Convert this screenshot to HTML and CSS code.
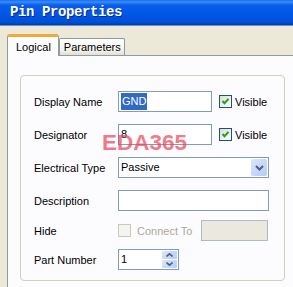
FILE: index.html
```html
<!DOCTYPE html>
<html>
  <head>
    <title>Pin Properties</title>
    <link rel="stylesheet" href="styles.css">
  </head>

  <body>
    <div class="window">
      <div class="titlebar">Pin Properties</div>

      <div class="tabstrip">
        <div class="tab tab-active">Logical</div>
        <div class="tab">Parameters</div>
      </div>

      <div class="panel">
        <div class="group">
          <div class="row">
            <label class="label">Display Name</label>
            <div class="field field-short"><span class="selected">GND</span></div>
            <span class="check checked"></span>
            <span class="check-text">Visible</span>
          </div>
          <div class="row">
            <label class="label">Designator</label>
            <div class="field field-short">8</div>
            <span class="check checked"></span>
            <span class="check-text">Visible</span>
          </div>
          <div class="row">
            <label class="label">Electrical Type</label>
            <div class="field field-long select">
              <span class="select-value">Passive</span>
              <span class="drop-button">
                <svg width="9" height="6" viewBox="0 0 9 6">
                  <path d="M1 1 L4.5 4.5 L8 1" fill="none" stroke="#4d6185" stroke-width="2"/>
                </svg>
              </span>
            </div>
          </div>
          <div class="row row-tight">
            <label class="label">Description</label>
            <div class="field field-long"></div>
          </div>
          <div class="row row-tighter">
            <label class="label">Hide</label>
            <span class="check disabled"></span>
            <span class="check-text muted">Connect To</span>
            <div class="field field-disabled"></div>
          </div>
          <div class="row">
            <label class="label">Part Number</label>
            <div class="field spinner">
              <span class="spin-value">1</span>
              <span class="spin-buttons">
                <span class="spin-button">
                  <svg width="7" height="4" viewBox="0 0 7 4">
                    <path d="M0.5 3.5 L3.5 0.8 L6.5 3.5" fill="none" stroke="#4d6185" stroke-width="1.6"/>
                  </svg>
                </span>
                <span class="spin-button">
                  <svg width="7" height="4" viewBox="0 0 7 4">
                    <path d="M0.5 0.5 L3.5 3.2 L6.5 0.5" fill="none" stroke="#4d6185" stroke-width="1.6"/>
                  </svg>
                </span>
              </span>
            </div>
          </div>
        </div>
      </div>

      <div class="watermark">EDA365</div>
    </div>
  </body>
</html>
```

FILE: styles.css
```css
body {
  margin: 0;
  font-family: "Liberation Sans", Arial, sans-serif;
  font-size: 11px;
  color: #000;
}

.window {
  position: relative;
  width: 293px;
  height: 287px;
  overflow: hidden;
  background-color: #ece9d8;
}

.titlebar {
  height: 26px;
  box-sizing: border-box;
  padding: 5px 0 0 10px;
  background: linear-gradient(#1a6ef0 0, #3a8cf8 2px, #0a5eec 5px, #0056e6 14px, #0050d8 22px, #003ea8 25px, #dcdcdc 26px);
  color: white;
  font-family: "Liberation Mono", "Courier New", monospace;
  font-weight: bold;
  font-size: 14px;
  line-height: 15px;
  letter-spacing: -0.4px;
  text-shadow: 1px 1px #0a2a8c;
}

.tabstrip {
  display: flex;
  align-items: flex-end;
  height: 29px;
  padding-left: 7px;
}

.tab {
  box-sizing: border-box;
  height: 17px;
  padding: 2px 3px 0 4px;
  border: 1px solid #919b9c;
  border-bottom: none;
  border-radius: 2px 2px 0 0;
  background: linear-gradient(#ffffff, #f3f2ec 70%, #e2ded2);
}

.tab-active {
  position: relative;
  z-index: 1;
  height: 22px;
  margin-bottom: -1px;
  padding: 4px 7px 0 8px;
  border-top: 3px solid #f2a93a;
  border-radius: 3px 3px 0 0;
  background: #fcfcfe;
}

.panel {
  box-sizing: border-box;
  height: 240px;
  margin-left: 7px;
  padding: 19px 0 0 12px;
  border: 1px solid #919b9c;
  border-right: none;
  background-color: #fcfcfe;
}

.group {
  box-sizing: border-box;
  width: 265px;
  height: 206px;
  padding: 15px 0 0 13px;
  border: 1px solid #d0d0bf;
  border-radius: 4px;
}

.row {
  display: flex;
  align-items: center;
  height: 21px;
  margin-bottom: 12px;
}

.row-tight {
  margin-bottom: 9px;
}

.row-tighter {
  margin-bottom: 8px;
}

.label {
  width: 84px;
  flex-shrink: 0;
}

.field {
  box-sizing: border-box;
  height: 21px;
  padding: 1px 2px;
  border: 1px solid #7f9db9;
  background-color: #fff;
  line-height: 17px;
}

.field-short {
  width: 94px;
}

.field-long {
  width: 151px;
}

.selected {
  display: inline-block;
  padding: 0 1px;
  background-color: #316ac5;
  color: white;
}

.check {
  box-sizing: border-box;
  width: 13px;
  height: 13px;
  margin-left: 7px;
  border: 1px solid #1c5180;
  background: linear-gradient(135deg, #dcdcd6, #fff);
}

.checked {
  background:
    url("data:image/svg+xml;utf8,<svg xmlns='http://www.w3.org/2000/svg' width='11' height='11'><path d='M2.5 5 L4.5 7.2 L8.5 2.8' fill='none' stroke='%2321a121' stroke-width='2'/></svg>") center no-repeat,
    linear-gradient(135deg, #dcdcd6, #fff);
}

.disabled {
  margin-left: 0;
  border-color: #cac8bb;
  background: #f4f4f0;
}

.check-text {
  margin-left: 3px;
}

.muted {
  margin-left: 6px;
  margin-right: 9px;
  color: #aca899;
}

.field-disabled {
  width: 67px;
  border-color: #aebacb;
  background-color: #ebe9dd;
}

.select {
  display: flex;
  align-items: center;
  padding: 0 1px 0 2px;
}

.select-value {
  flex: 1;
}

.drop-button {
  display: flex;
  align-items: center;
  justify-content: center;
  width: 16px;
  height: 17px;
  border-radius: 2px;
  background: linear-gradient(135deg, #dbe6fd, #b6cbf8);
}

.spinner {
  display: flex;
  align-items: center;
  width: 61px;
  padding: 0 1px 0 2px;
}

.spin-value {
  flex: 1;
}

.spin-buttons {
  display: flex;
  flex-direction: column;
  gap: 1px;
}

.spin-button {
  display: flex;
  align-items: center;
  justify-content: center;
  width: 15px;
  height: 8px;
  border-radius: 1px;
  background: linear-gradient(135deg, #dbe6fd, #b6cbf8);
}

.watermark {
  position: absolute;
  left: 102px;
  top: 132px;
  font-weight: bold;
  font-size: 22.5px;
  line-height: 1;
  color: rgba(236, 70, 90, 0.72);
}
```
